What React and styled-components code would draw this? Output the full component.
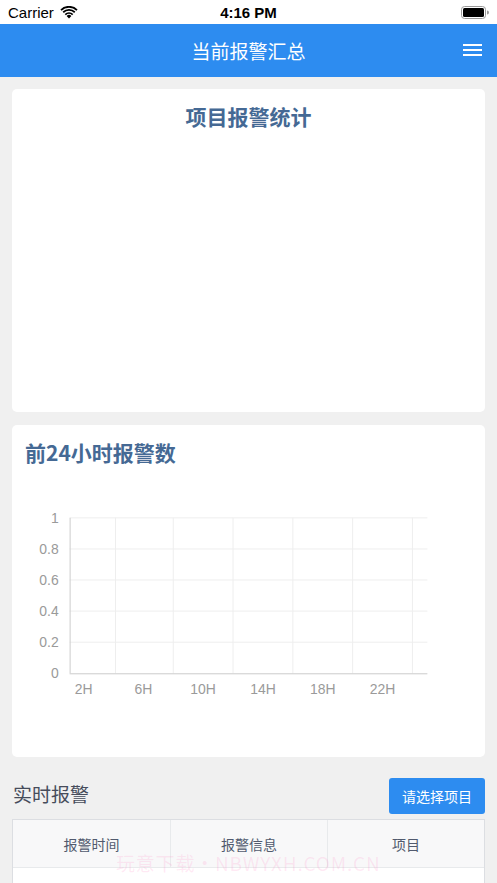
import React from 'react';
import styled, {createGlobalStyle} from 'styled-components';

const GlobalStyle = createGlobalStyle`
    html, body {
        margin: 0;
        padding: 0;
        background: #f0f0f0;
    }
    body {
        font-family: "Noto Sans CJK SC", "Liberation Sans", sans-serif;
    }
`;

const Seite = styled.div`
    position: relative;
    width: 497px;
    height: 883px;
    overflow: hidden;
    background: #f0f0f0;
`;

const StatusLeiste = styled.div`
    height: 24px;
    background: #ffffff;
    display: grid;
    grid-template-columns: 1fr auto 1fr;
    align-items: center;
    padding: 0 8px;
    font-family: "Liberation Sans", "Noto Sans", sans-serif;
    font-size: 15px;
    color: #000;
`;

const StatusLinks = styled.div`
    display: flex;
    align-items: center;
    gap: 6px;
`;

const Uhrzeit = styled.div`
    font-weight: 700;
    font-size: 15px;
`;

const StatusRechts = styled.div`
    display: flex;
    justify-content: flex-end;
`;

const Kopf = styled.header`
    height: 53px;
    background: #2d8cf0;
    display: flex;
    align-items: center;
    justify-content: center;
    position: relative;
    color: #fff;
    font-size: 19px;
`;

const MenueKnopf = styled.div`
    position: absolute;
    right: 15px;
    top: 20px;
    width: 19px;
    display: flex;
    flex-direction: column;
    gap: 3px;
    span {
        display: block;
        height: 2px;
        background: #fff;
    }
`;

const Inhalt = styled.main`
    padding: 12px 12px 0;
`;

const Karte = styled.section`
    background: #fff;
    border-radius: 5px;
    height: ${p => p.$hoehe}px;
    padding: 11px 13px 0;
    box-sizing: border-box;
    margin-bottom: 13px;
    display: flex;
    flex-direction: column;
`;

const KartenTitel = styled.h2`
    margin: 0;
    font-size: 21px;
    line-height: 32px;
    font-weight: 700;
    color: #456994;
    text-align: ${p => p.$zentriert ? 'center' : 'left'};
`;

const Diagramm = styled.svg`
    display: block;
    margin: 2px -13px 0;
    width: 473px;
    height: 288px;
`;

const AbschnittZeile = styled.div`
    margin-top: 21px;
    height: 36px;
    display: flex;
    align-items: center;
    justify-content: space-between;
`;

const AbschnittTitel = styled.div`
    font-size: 19px;
    color: #464c5b;
    padding: 0 0 5px 1px;
`;

const AuswahlKnopf = styled.button`
    width: 96px;
    height: 36px;
    border: none;
    border-radius: 3px;
    background: #2d8cf0;
    color: #fff;
    font-family: inherit;
    font-size: 14px;
    padding: 0;
`;

const Tabelle = styled.div`
    margin-top: 5px;
    border: 1px solid #dcdee2;
    border-bottom: none;
    background: #fff;
`;

const KopfZeile = styled.div`
    display: grid;
    grid-template-columns: 1fr 1fr 1fr;
    background: #f8f8f9;
    border-bottom: 1px solid #e8eaec;
`;

const KopfZelle = styled.div`
    height: 47px;
    display: flex;
    align-items: center;
    justify-content: center;
    font-size: 14px;
    line-height: 16px;
    color: #515a6e;
    border-left: ${p => p.$erste ? 'none' : '1px solid #e8eaec'};
`;

const LeereZeile = styled.div`
    height: 60px;
    background: #fff;
`;

const Wasserzeichen = styled.div`
    position: absolute;
    left: 116px;
    top: 853px;
    font-size: 19px;
    line-height: 19px;
    letter-spacing: 0.8px;
    color: rgba(255, 120, 190, 0.16);
    pointer-events: none;
`;

const WlanSymbol = () => (
    <svg width="18" height="13" viewBox="0 0 18 13">
        <path d="M9 12.5 L6.6 9.9 A3.4 3.4 0 0 1 11.4 9.9 Z" fill="#000"/>
        <path d="M4.7 7.9 A6.2 6.2 0 0 1 13.3 7.9 L12.1 9.2 A4.5 4.5 0 0 0 5.9 9.2 Z" fill="#000"/>
        <path d="M2.6 5.6 A9.2 9.2 0 0 1 15.4 5.6 L14.2 6.9 A7.4 7.4 0 0 0 3.8 6.9 Z" fill="#000"/>
        <path d="M0.4 3.4 A12.3 12.3 0 0 1 17.6 3.4 L16.4 4.7 A10.5 10.5 0 0 0 1.6 4.7 Z" fill="#000"/>
    </svg>
);

const Batterie = () => (
    <svg width="28" height="13" viewBox="0 0 28 13">
        <rect x="0.5" y="0.5" width="24" height="12" rx="3" fill="none" stroke="#999" strokeWidth="1"/>
        <rect x="2" y="2" width="21" height="9" rx="1.5" fill="#000"/>
        <path d="M26 4.5 A2 2 0 0 1 26 8.5 Z" fill="#999"/>
    </svg>
);

const yWerte = ['1', '0.8', '0.6', '0.4', '0.2', '0'];
const xBeschriftungen = ['2H', '6H', '10H', '14H', '18H', '22H'];
const vertikaleLinien = [103, 161, 221, 281, 341, 401];

const StundenDiagramm = () => {
    const oben = 48;
    const unten = 204;
    const schritt = (unten - oben) / 5;
    return (
        <Diagramm viewBox="0 0 473 288">
            {yWerte.map((wert, i) => {
                const y = oben + i * schritt;
                return (
                    <g key={wert}>
                        {i < 5 && <line x1="57" x2="416" y1={y} y2={y} stroke="#eeeeee" strokeWidth="1"/>}
                        <text x="46" y={y + 5} textAnchor="end" fontSize="14" fill="#9a9a9a"
                              fontFamily="Liberation Sans, sans-serif">{wert}</text>
                    </g>
                );
            })}
            {vertikaleLinien.map(x => (
                <line key={x} x1={x} x2={x} y1={oben} y2={unten} stroke="#eeeeee" strokeWidth="1"/>
            ))}
            <line x1="57.5" x2="57.5" y1={oben} y2={unten} stroke="#cccccc" strokeWidth="1"/>
            <line x1="57" x2="416" y1={unten + 0.5} y2={unten + 0.5} stroke="#cccccc" strokeWidth="1"/>
            {xBeschriftungen.map((t, i) => (
                <text key={t} x={71 + i * 60} y="225" textAnchor="middle" fontSize="14" fill="#9a9a9a"
                      fontFamily="Liberation Sans, sans-serif">{t}</text>
            ))}
        </Diagramm>
    );
};

const App = () => {
    return (
        <Seite>
            <GlobalStyle/>
            <StatusLeiste>
                <StatusLinks>Carrier <WlanSymbol/></StatusLinks>
                <Uhrzeit>4:16 PM</Uhrzeit>
                <StatusRechts><Batterie/></StatusRechts>
            </StatusLeiste>
            <Kopf>
                当前报警汇总
                <MenueKnopf><span/><span/><span/></MenueKnopf>
            </Kopf>
            <Inhalt>
                <Karte $hoehe={323}>
                    <KartenTitel $zentriert>项目报警统计</KartenTitel>
                </Karte>
                <Karte $hoehe={332}>
                    <KartenTitel>前24小时报警数</KartenTitel>
                    <StundenDiagramm/>
                </Karte>
                <AbschnittZeile>
                    <AbschnittTitel>实时报警</AbschnittTitel>
                    <AuswahlKnopf>请选择项目</AuswahlKnopf>
                </AbschnittZeile>
                <Tabelle>
                    <KopfZeile>
                        <KopfZelle $erste>报警时间</KopfZelle>
                        <KopfZelle>报警信息</KopfZelle>
                        <KopfZelle>项目</KopfZelle>
                    </KopfZeile>
                    <LeereZeile/>
                </Tabelle>
            </Inhalt>
            <Wasserzeichen>玩意下载•NBWYXH.COM.CN</Wasserzeichen>
        </Seite>
    );
};

export default App;
